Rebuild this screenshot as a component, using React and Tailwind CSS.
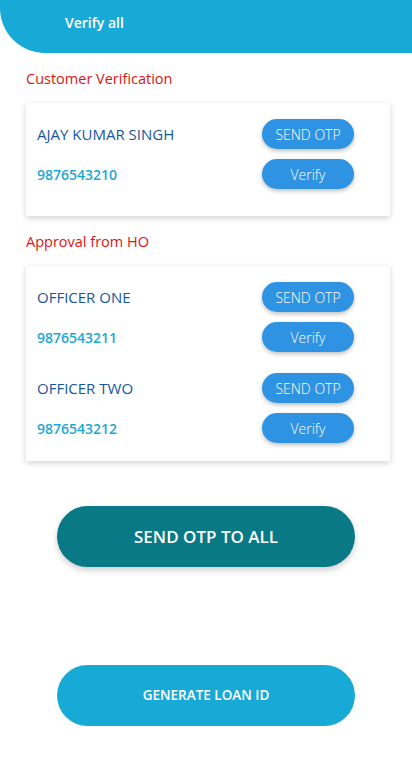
import React from "react";

const contacts = {
  customer: [{ name: "AJAY KUMAR SINGH", phone: "9876543210" }],
  ho: [
    { name: "OFFICER ONE", phone: "9876543211" },
    { name: "OFFICER TWO", phone: "9876543212" },
  ],
};

function SmallButton({ children }) {
  return (
    <button className="w-[92px] h-[30px] rounded-full bg-[#2f93e3] text-white text-[14px] font-light shadow-[0_2px_4px_rgba(0,0,0,0.25)]">
      {children}
    </button>
  );
}

function ContactRows({ person }) {
  return (
    <div className="flex flex-col gap-[10px]">
      <div className="flex items-center justify-between">
        <span className="text-[15px] text-[#17569c]">{person.name}</span>
        <SmallButton>SEND OTP</SmallButton>
      </div>
      <div className="flex items-center justify-between">
        <span className="text-[14px] font-semibold text-[#1aa8d6]">{person.phone}</span>
        <SmallButton>Verify</SmallButton>
      </div>
    </div>
  );
}

export default function App() {
  return (
    <div className="w-[412px] h-[778px] bg-white font-['Open_Sans',sans-serif]">
      {/* Header */}
      <div className="h-[53px] bg-[#17aad6] rounded-bl-[45px] flex items-center pl-[65px] pb-[8px]">
        <span className="text-white font-semibold text-[14px]">Verify all</span>
      </div>

      <div className="pl-[26px] pr-[22px]">
        <p className="mt-[15px] text-[14.5px] leading-[21px] text-[#e01212]">Customer Verification</p>

        <div className="mt-[14px] bg-white shadow-[0_2px_6px_rgba(0,0,0,0.18)] pl-[11px] pr-[36px] pt-[16px] pb-[27px]">
          {contacts.customer.map((p) => (
            <ContactRows key={p.phone} person={p} />
          ))}
        </div>

        <p className="mt-[15px] text-[14.5px] leading-[21px] text-[#e01212]">Approval from HO</p>

        <div className="mt-[14px] bg-white shadow-[0_2px_6px_rgba(0,0,0,0.18)] pl-[11px] pr-[36px] pt-[16px] pb-[18px] flex flex-col gap-[21px]">
          {contacts.ho.map((p) => (
            <ContactRows key={p.phone} person={p} />
          ))}
        </div>
      </div>

      <div className="flex flex-col items-center">
        <button className="mt-[45px] w-[298px] h-[61px] rounded-full bg-[#087985] text-white text-[17px] font-semibold shadow-[0_3px_6px_rgba(0,0,0,0.2)]">
          SEND OTP TO ALL
        </button>

        <button className="mt-[98px] w-[298px] h-[61px] rounded-full bg-[#17aad6] text-white text-[13.5px] font-semibold">
          GENERATE LOAN ID
        </button>
      </div>
    </div>
  );
}
